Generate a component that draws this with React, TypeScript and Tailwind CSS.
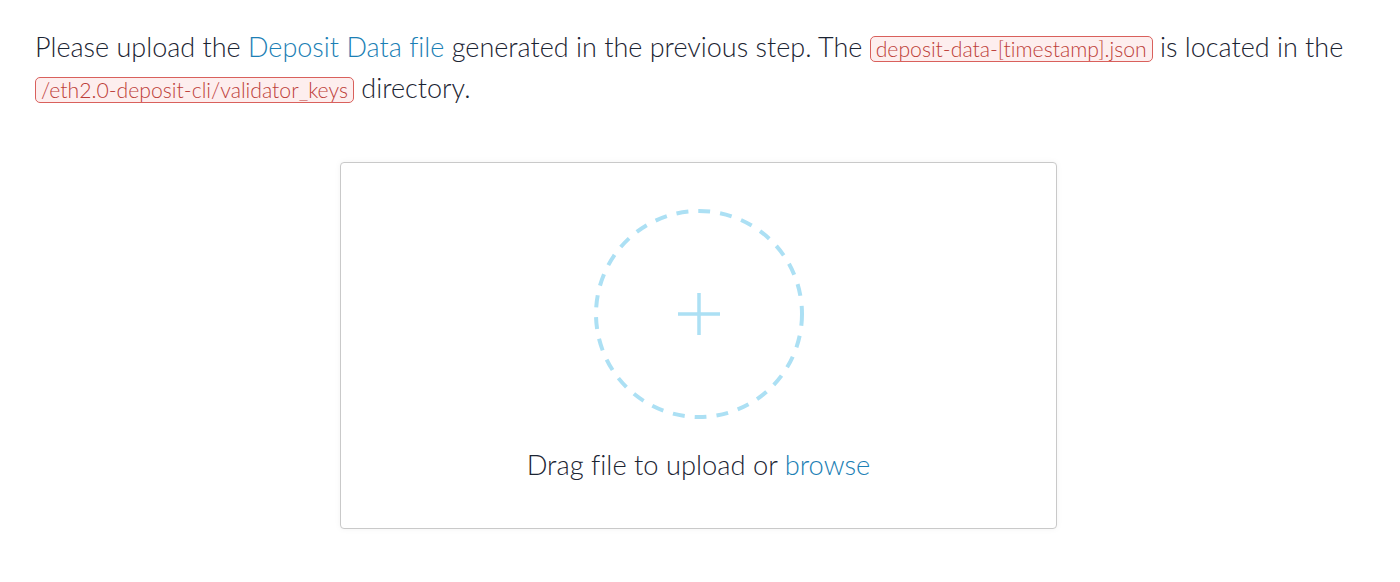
import { useState } from "react"

function Code({ children }: { children: React.ReactNode }) {
  return (
    <code className="inline-block rounded-[5px] border border-[#d9605c] bg-[#fdeeee] px-[5px] text-[21.2px] leading-[24px] text-[#bd3e39] [font-family:inherit]">
      {children}
    </code>
  )
}

function UploadCircle() {
  return (
    <svg width="216" height="216" viewBox="0 0 216 216" fill="none">
      <circle
        cx="108"
        cy="108"
        r="103"
        stroke="#ace0f4"
        strokeWidth="4"
        strokeDasharray="12 10"
      />
      <path d="M108 87v42M87 108h42" stroke="#ace0f4" strokeWidth="3.5" />
    </svg>
  )
}

export default function App() {
  const [hover, setHover] = useState(false)

  return (
    <div className="min-h-[582px] bg-white px-[35px] pt-[26px] font-['Lato',sans-serif] font-light text-[#1b2432] [font-variant-ligatures:none]">
      <p className="text-[27px] leading-[41px]">
        Please upload the <span className="text-[#1c7fb5]">Deposit Data file</span> generated in the previous step. The{" "}
        <Code>deposit-data-[timestamp].json</Code> is located in the <Code>/eth2.0-deposit-cli/validator_keys</Code>{" "}
        directory.
      </p>

      <div className="mt-[54px] flex justify-center">
        <div
          onMouseEnter={() => setHover(true)}
          onMouseLeave={() => setHover(false)}
          className={`-ml-[3px] flex h-[367px] w-[717px] flex-col items-center rounded-[4px] border border-[#c9c9c9] bg-white pt-[43px] shadow-[0_0_6px_rgba(0,0,0,0.05)] ${hover ? "cursor-pointer" : ""}`}
        >
          <UploadCircle />
          <div className="mt-[29px] text-[27.3px] leading-none text-[#1b2432]">
            Drag file to upload or <span className="text-[#1c7fb5]">browse</span>
          </div>
        </div>
      </div>
    </div>
  )
}
